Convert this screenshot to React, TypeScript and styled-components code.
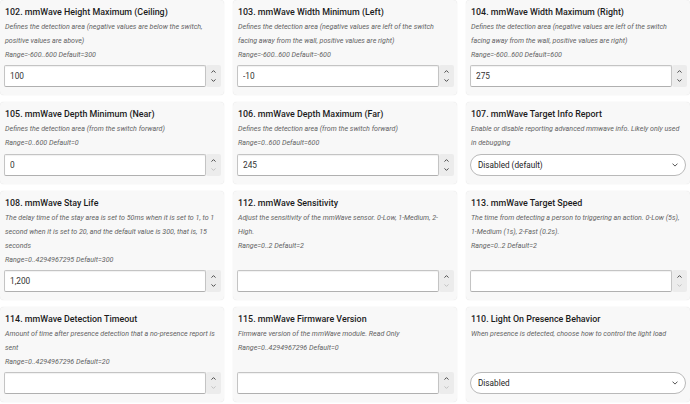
import React from 'react';
import styled, { createGlobalStyle } from 'styled-components';

type Setting = {
  id: string;
  title: string;
  description: string;
  range?: string;
  kind: 'number' | 'select';
  value: string;
  atMin?: boolean;
};

const SETTINGS: Setting[] = [
  {
    id: '102',
    title: '102. mmWave Height Maximum (Ceiling)',
    description: 'Defines the detection area (negative values are below the switch, positive values are above)',
    range: 'Range=-600..600 Default=300',
    kind: 'number',
    value: '100',
  },
  {
    id: '103',
    title: '103. mmWave Width Minimum (Left)',
    description:
      'Defines the detection area (negative values are left of the switch facing away from the wall, positive values are right)',
    range: 'Range=-600..600 Default=-600',
    kind: 'number',
    value: '-10',
  },
  {
    id: '104',
    title: '104. mmWave Width Maximum (Right)',
    description:
      'Defines the detection area (negative values are left of the switch facing away from the wall, positive values are right)',
    range: 'Range=-600..600 Default=600',
    kind: 'number',
    value: '275',
  },
  {
    id: '105',
    title: '105. mmWave Depth Minimum (Near)',
    description: 'Defines the detection area (from the switch forward)',
    range: 'Range=0..600 Default=0',
    kind: 'number',
    value: '0',
    atMin: true,
  },
  {
    id: '106',
    title: '106. mmWave Depth Maximum (Far)',
    description: 'Defines the detection area (from the switch forward)',
    range: 'Range=0..600 Default=600',
    kind: 'number',
    value: '245',
  },
  {
    id: '107',
    title: '107. mmWave Target Info Report',
    description: 'Enable or disable reporting advanced mmwave info. Likely only used in debugging',
    kind: 'select',
    value: 'Disabled (default)',
  },
  {
    id: '108',
    title: '108. mmWave Stay Life',
    description:
      'The delay time of the stay area is set to 50ms when it is set to 1, to 1 second when it is set to 20, and the default value is 300, that is, 15 seconds',
    range: 'Range=0..4294967295 Default=300',
    kind: 'number',
    value: '1,200',
  },
  {
    id: '112',
    title: '112. mmWave Sensitivity',
    description: 'Adjust the sensitivity of the mmWave sensor. 0-Low, 1-Medium, 2-High.',
    range: 'Range=0..2 Default=2',
    kind: 'number',
    value: '',
    atMin: true,
  },
  {
    id: '113',
    title: '113. mmWave Target Speed',
    description: 'The time from detecting a person to triggering an action. 0-Low (5s), 1-Medium (1s), 2-Fast (0.2s).',
    range: 'Range=0..2 Default=2',
    kind: 'number',
    value: '',
    atMin: true,
  },
  {
    id: '114',
    title: '114. mmWave Detection Timeout',
    description: 'Amount of time after presence detection that a no-presence report is sent',
    range: 'Range=0..4294967296 Default=20',
    kind: 'number',
    value: '',
    atMin: true,
  },
  {
    id: '115',
    title: '115. mmWave Firmware Version',
    description: 'Firmware version of the mmWave module. Read Only',
    range: 'Range=0..4294967296 Default=0',
    kind: 'number',
    value: '',
    atMin: true,
  },
  {
    id: '110',
    title: '110. Light On Presence Behavior',
    description: 'When presence is detected, choose how to control the light load',
    kind: 'select',
    value: 'Disabled',
  },
];

const GlobalStyle = createGlobalStyle`
  html, body {
    margin: 0;
    padding: 0;
    background: #ffffff;
  }
  body {
    font-family: Roboto, 'Noto Sans', sans-serif;
    overflow: hidden;
  }
`;

const Page = styled.div`
  width: 690px;
  height: 404px;
  overflow: hidden;
  display: grid;
  grid-template-columns: repeat(3, 224px);
  column-gap: 9px;
  row-gap: 7px;
  align-content: start;
`;

const Card = styled.section`
  display: flex;
  flex-direction: column;
  background: #f8f8f8;
  border-radius: 4px;
  box-shadow: 0 0 1px rgba(0, 0, 0, 0.16);
  padding: 4px 3px 8px 4px;
`;

const Title = styled.h3`
  margin: 0;
  font-size: 8.9px;
  font-weight: 500;
  line-height: 16px;
  color: #1c1c1c;
  padding-left: 1px;
`;

const TextBlock = styled.div`
  padding: 0 1px 4px 1px;
`;

const Description = styled.p`
  margin: 0;
  font-size: 7.1px;
  font-style: italic;
  font-synthesis: style;
  line-height: 14px;
  color: #636363;
`;

const RangeText = styled(Description)`
  line-height: 13px;
`;

const ControlRow = styled.div`
  margin-top: auto;
  display: flex;
  height: 22px;
`;

const NumberField = styled.input`
  flex: 1;
  min-width: 0;
  box-sizing: border-box;
  height: 22px;
  margin: 0;
  padding: 0 5px;
  border: 1px solid #c4c4c4;
  border-bottom-color: #b0b0b0;
  border-radius: 2px;
  background: #ffffff;
  box-shadow: inset 0 1px 1px rgba(0, 0, 0, 0.06);
  font-family: Roboto, 'Noto Sans', sans-serif;
  font-size: 8.3px;
  color: #333333;
  outline: none;
`;

const Spinner = styled.div`
  width: 15px;
  display: flex;
  flex-direction: column;
  align-items: center;
  justify-content: center;
  gap: 6px;
  background: #ececec;
  border-radius: 2px;
`;

const Chevron = styled.svg<{ $muted?: boolean }>`
  display: block;
  width: 5px;
  height: 3px;
  stroke: ${(p) => (p.$muted ? '#c2c2c2' : '#4a4a4a')};
`;

const SelectBox = styled.div`
  flex: 1;
  box-sizing: border-box;
  height: 22px;
  margin-right: 1px;
  display: flex;
  align-items: center;
  justify-content: space-between;
  padding: 0 7px 0 7px;
  border: 1px solid #b9b9b9;
  border-radius: 11px;
  background: #ffffff;
  font-size: 8.2px;
  color: #222222;
`;

const SelectChevron = styled.svg`
  display: block;
  width: 6px;
  height: 4px;
  stroke: #555555;
`;

const UpIcon = ({ muted }: { muted?: boolean }) => (
  <Chevron $muted={muted} viewBox="0 0 5 3" fill="none" strokeWidth={1}>
    <path d="M0.5 2.6 L2.5 0.6 L4.5 2.6" />
  </Chevron>
);

const DownIcon = ({ muted }: { muted?: boolean }) => (
  <Chevron $muted={muted} viewBox="0 0 5 3" fill="none" strokeWidth={1}>
    <path d="M0.5 0.4 L2.5 2.4 L4.5 0.4" />
  </Chevron>
);

const NumberControl = ({ value, atMin }: { value: string; atMin?: boolean }) => (
  <ControlRow>
    <NumberField type="text" readOnly value={value} />
    <Spinner>
      <UpIcon />
      <DownIcon muted={atMin} />
    </Spinner>
  </ControlRow>
);

const SelectControl = ({ value }: { value: string }) => (
  <ControlRow>
    <SelectBox>
      <span>{value}</span>
      <SelectChevron viewBox="0 0 6 4" fill="none" strokeWidth={1}>
        <path d="M0.5 0.6 L3 3.1 L5.5 0.6" />
      </SelectChevron>
    </SelectBox>
  </ControlRow>
);

const SettingCard = ({ setting }: { setting: Setting }) => (
  <Card>
    <Title>{setting.title}</Title>
    <TextBlock>
      <Description>{setting.description}</Description>
      {setting.range && <RangeText>{setting.range}</RangeText>}
    </TextBlock>
    {setting.kind === 'number' ? (
      <NumberControl value={setting.value} atMin={setting.atMin} />
    ) : (
      <SelectControl value={setting.value} />
    )}
  </Card>
);

export default function App() {
  return (
    <>
      <GlobalStyle />
      <Page>
        {SETTINGS.map((s) => (
          <SettingCard key={s.id} setting={s} />
        ))}
      </Page>
    </>
  );
}
